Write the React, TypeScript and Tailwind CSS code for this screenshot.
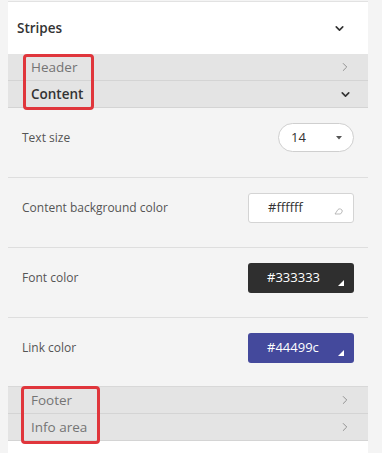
import { ChevronDown, ChevronRight } from "lucide-react";

const font = { fontFamily: '"Open Sans", "Noto Sans", sans-serif' };

function SubRow({ label, open, dim }: { label: string; open?: boolean; dim?: boolean }) {
  return (
    <div className="flex h-[27px] items-center justify-between border-b border-[#d4d4d4] bg-[#e4e4e4] pl-[23px] pr-[16px]">
      <span className={`text-[13.5px] ${dim ? "font-medium text-[#747474]" : "font-semibold text-[#333]"}`}>{label}</span>
      {open ? (
        <ChevronDown size={13} strokeWidth={3} className="text-[#333]" />
      ) : (
        <ChevronRight size={14} strokeWidth={1.6} className="text-[#8c8c8c]" />
      )}
    </div>
  );
}

function Row({ label, children, last }: { label: string; children: React.ReactNode; last?: boolean }) {
  return (
    <div className={`flex items-start justify-between pl-[14px] pr-[14px] pt-[15px] ${last ? "h-[68px]" : "h-[70px] border-b border-[#dedede]"}`}>
      <span className="mt-[6px] text-[12px] text-[#555]">{label}</span>
      {children}
    </div>
  );
}

function ColorBox({ value, bg, dark }: { value: string; bg: string; dark?: boolean }) {
  return (
    <div
      className={`relative flex h-[30px] w-[106px] items-center rounded-[3px] pl-[19px] text-[13px] ${
        dark ? "text-white" : "border border-[#d4d4d4] text-[#333]"
      } ${bg}`}
    >
      {value}
      {dark ? (
        <svg className="absolute bottom-[7px] right-[10px]" width="6" height="6" viewBox="0 0 6 6">
          <polygon points="6,0 6,6 0,6" fill="#fff" />
        </svg>
      ) : (
        <svg className="absolute bottom-[7px] right-[10px]" width="9" height="7" viewBox="0 0 9 7">
          <path d="M1 6 L4 1.5 Q5 0.5 6.5 1 L8 2 Q8.5 3 8 4 L6.5 6 Z" fill="none" stroke="#aaa" strokeWidth="0.8" />
        </svg>
      )}
    </div>
  );
}

export default function App() {
  return (
    <div className="h-[453px] w-[382px] overflow-hidden bg-[#f4f4f4]" style={font}>
      <div className="ml-2 w-[360px]">
        {/* Section title */}
        <div className="mt-px flex h-[53px] items-center justify-between border-t border-[#e2e2e2] bg-white pl-[9px] pr-[22px]">
          <span className="text-[13.5px] font-semibold text-[#333]">Stripes</span>
          <ChevronDown size={13} strokeWidth={3} className="text-[#333]" />
        </div>

        <div className="relative">
          <SubRow label="Header" dim />
          <SubRow label="Content" open />
          <div className="pointer-events-none absolute left-[15px] top-0 h-[56px] w-[71px] rounded-[4px] border-[3px] border-[#e0363c]" />
        </div>

        {/* Content settings */}
        <div className="bg-[#f4f4f4]">
          <Row label="Text size">
            <div className="flex h-[29px] w-[76px] items-center justify-between rounded-full border border-[#cfcfcf] bg-white pl-[12px] pr-[11px] text-[13px] text-[#333]">
              <span>14</span>
              <svg width="6" height="4" viewBox="0 0 6 4">
                <polygon points="0,0 6,0 3,3.5" fill="#555" />
              </svg>
            </div>
          </Row>
          <Row label="Content background color">
            <ColorBox value="#ffffff" bg="bg-white" />
          </Row>
          <Row label="Font color">
            <ColorBox value="#333333" bg="bg-[#2f2f2f]" dark />
          </Row>
          <Row label="Link color" last>
            <ColorBox value="#44499c" bg="bg-[#44499c]" dark />
          </Row>
        </div>

        <div className="relative border-t border-[#d8d8d8]">
          <SubRow label="Footer" dim />
          <SubRow label="Info area" dim />
          <div className="pointer-events-none absolute left-[13px] top-[-1px] h-[58px] w-[79px] rounded-[4px] border-[3px] border-[#e0363c]" />
        </div>

        <div className="h-[20px] bg-white" />
      </div>
    </div>
  );
}
